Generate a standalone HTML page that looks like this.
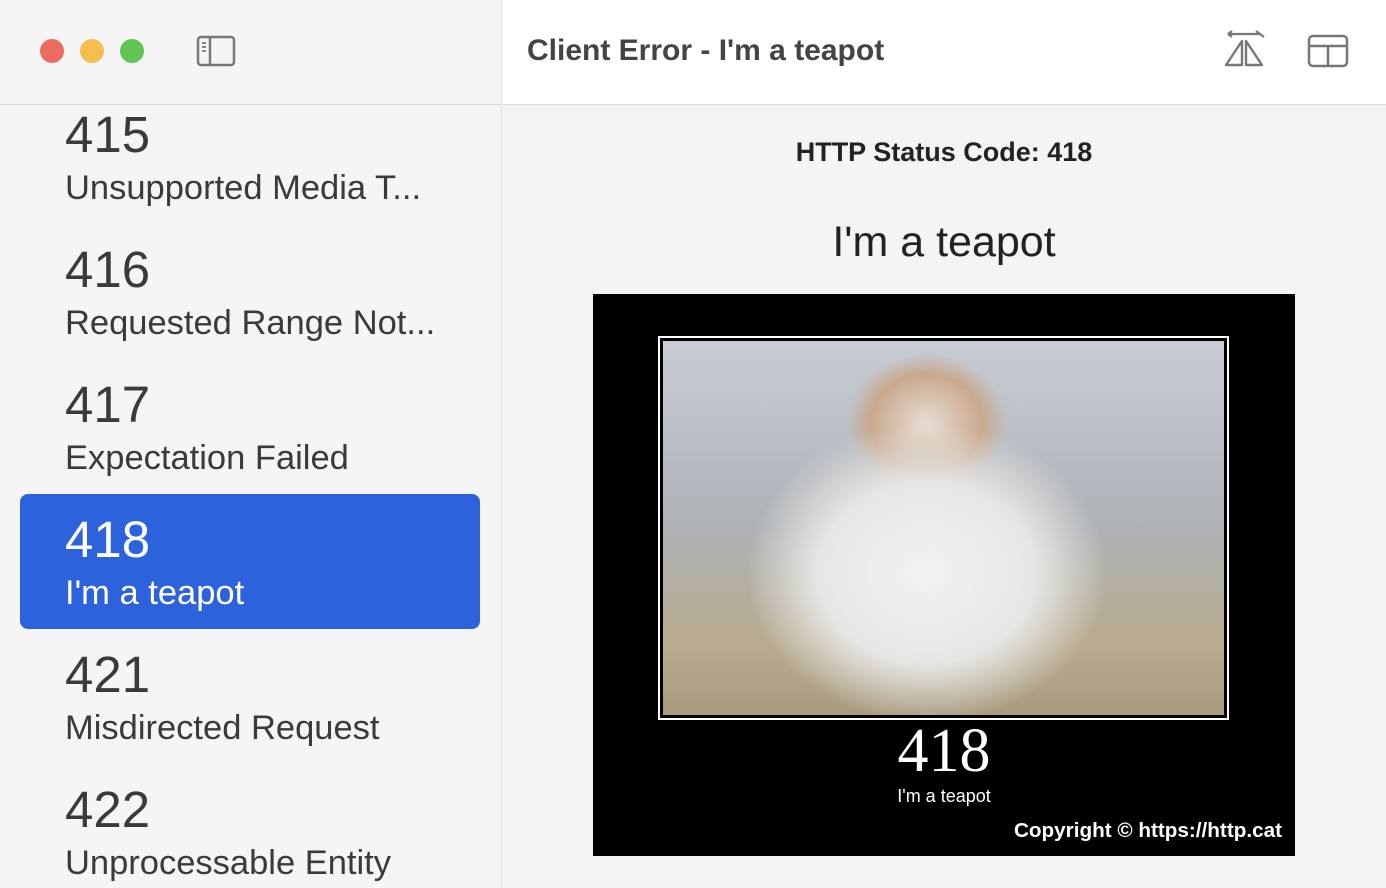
<!DOCTYPE html><html><head><style>
html,body{margin:0;width:1386px;height:888px;overflow:hidden}
body{font-family:"Liberation Sans",sans-serif;background:#f4f4f4;position:relative}
.side{position:absolute;left:0;top:0;width:501px;height:888px;background:#f5f5f5;border-right:1px solid #e0e0e0}
.sh{position:absolute;left:0;top:0;width:501px;height:104px;border-bottom:1px solid #d9d9d9;background:#f5f5f5}
.dot{position:absolute;top:39px;width:24px;height:24px;border-radius:50%}
.row{position:absolute;left:20px;width:460px;height:135px;border-radius:8px;color:#3a3a3a}
.row .n{position:absolute;left:45px;top:16px;font-size:51px;line-height:60px}
.row .l{position:absolute;left:45px;top:79px;font-size:34.5px;line-height:40px;white-space:nowrap}
.sel{background:#2c63dc;color:#fff}
.rh{position:absolute;left:502px;top:0;right:0;height:104px;background:#fff;border-bottom:1px solid #dcdcdc}
</style></head><body>
<div class="side">
<div class="row" style="top:89px"><div class="n">415</div><div class="l">Unsupported Media T...</div></div>
<div class="row" style="top:224px"><div class="n">416</div><div class="l">Requested Range Not...</div></div>
<div class="row" style="top:359px"><div class="n">417</div><div class="l">Expectation Failed</div></div>
<div class="row sel" style="top:494px"><div class="n">418</div><div class="l">I'm a teapot</div></div>
<div class="row" style="top:629px"><div class="n">421</div><div class="l">Misdirected Request</div></div>
<div class="row" style="top:764px"><div class="n">422</div><div class="l">Unprocessable Entity</div></div>
<div class="sh">
<div class="dot" style="left:40px;background:#ec6a5e"></div>
<div class="dot" style="left:80px;background:#f4bf4f"></div>
<div class="dot" style="left:120px;background:#61c554"></div>
<svg style="position:absolute;left:196px;top:35px" width="40" height="32" viewBox="0 0 40 32"><rect x="2" y="2" width="36" height="28" rx="3" fill="none" stroke="#777" stroke-width="2.5"/><line x1="14" y1="2" x2="14" y2="30" stroke="#777" stroke-width="2.5"/><path d="M6 8h4M6 12h4M6 16h4" stroke="#777" stroke-width="1.8"/></svg>
</div>
</div>
<div class="rh">
<div style="position:absolute;left:25px;top:34px;font-size:30px;font-weight:bold;color:#444">Client Error - I'm a teapot</div>
<svg style="position:absolute;left:720px;top:28px" width="44" height="40" viewBox="0 0 44 40"><path d="M6 6h32M6 6l4-3M6 6l4 3M38 6l-4-3M38 6l4 3" stroke="#777" stroke-width="2.2" fill="none"/><path d="M20 13v24H4zM24 13v24h16z" stroke="#777" stroke-width="2.4" fill="none" stroke-linejoin="round"/></svg>
<svg style="position:absolute;left:805px;top:34px" width="42" height="34" viewBox="0 0 42 34"><rect x="2" y="2" width="38" height="30" rx="4" fill="none" stroke="#777" stroke-width="2.5"/><path d="M2 12h38M21 12v20" stroke="#777" stroke-width="2.5"/></svg>
</div>
<div style="position:absolute;left:502px;width:884px;top:137px;text-align:center;font-size:27px;font-weight:bold;color:#222">HTTP Status Code: 418</div>
<div style="position:absolute;left:502px;width:884px;top:218px;text-align:center;font-size:43px;color:#222">I'm a teapot</div>
<div style="position:absolute;left:593px;top:294px;width:702px;height:562px;background:#000">
<div style="position:absolute;left:65px;top:42px;width:571px;height:384px;border:2px solid #fff;box-sizing:border-box;padding:3px;background:#000">
<div style="width:100%;height:100%;background:radial-gradient(ellipse 180px 150px at 47% 62%,#f2f2f0 0,#e6e6e4 60%,transparent 100%),radial-gradient(ellipse 80px 70px at 47% 22%,#e8ddd4 0,#c9a98e 70%,transparent 100%),linear-gradient(#c8ccd4 0,#aeb2b6 50%,#b9ac8f 80%,#a89a7e 100%)"></div>
</div>
<div style="position:absolute;left:0;width:702px;top:424px;text-align:center;font-family:'Liberation Serif',serif;font-size:62px;color:#fff;line-height:66px">418</div>
<div style="position:absolute;left:0;width:702px;top:492px;text-align:center;font-size:18px;color:#fff">I'm a teapot</div>
<div style="position:absolute;right:13px;top:525px;font-size:20.7px;font-weight:bold;color:#fff">Copyright © https://http.cat</div>
</div>
</body></html>
